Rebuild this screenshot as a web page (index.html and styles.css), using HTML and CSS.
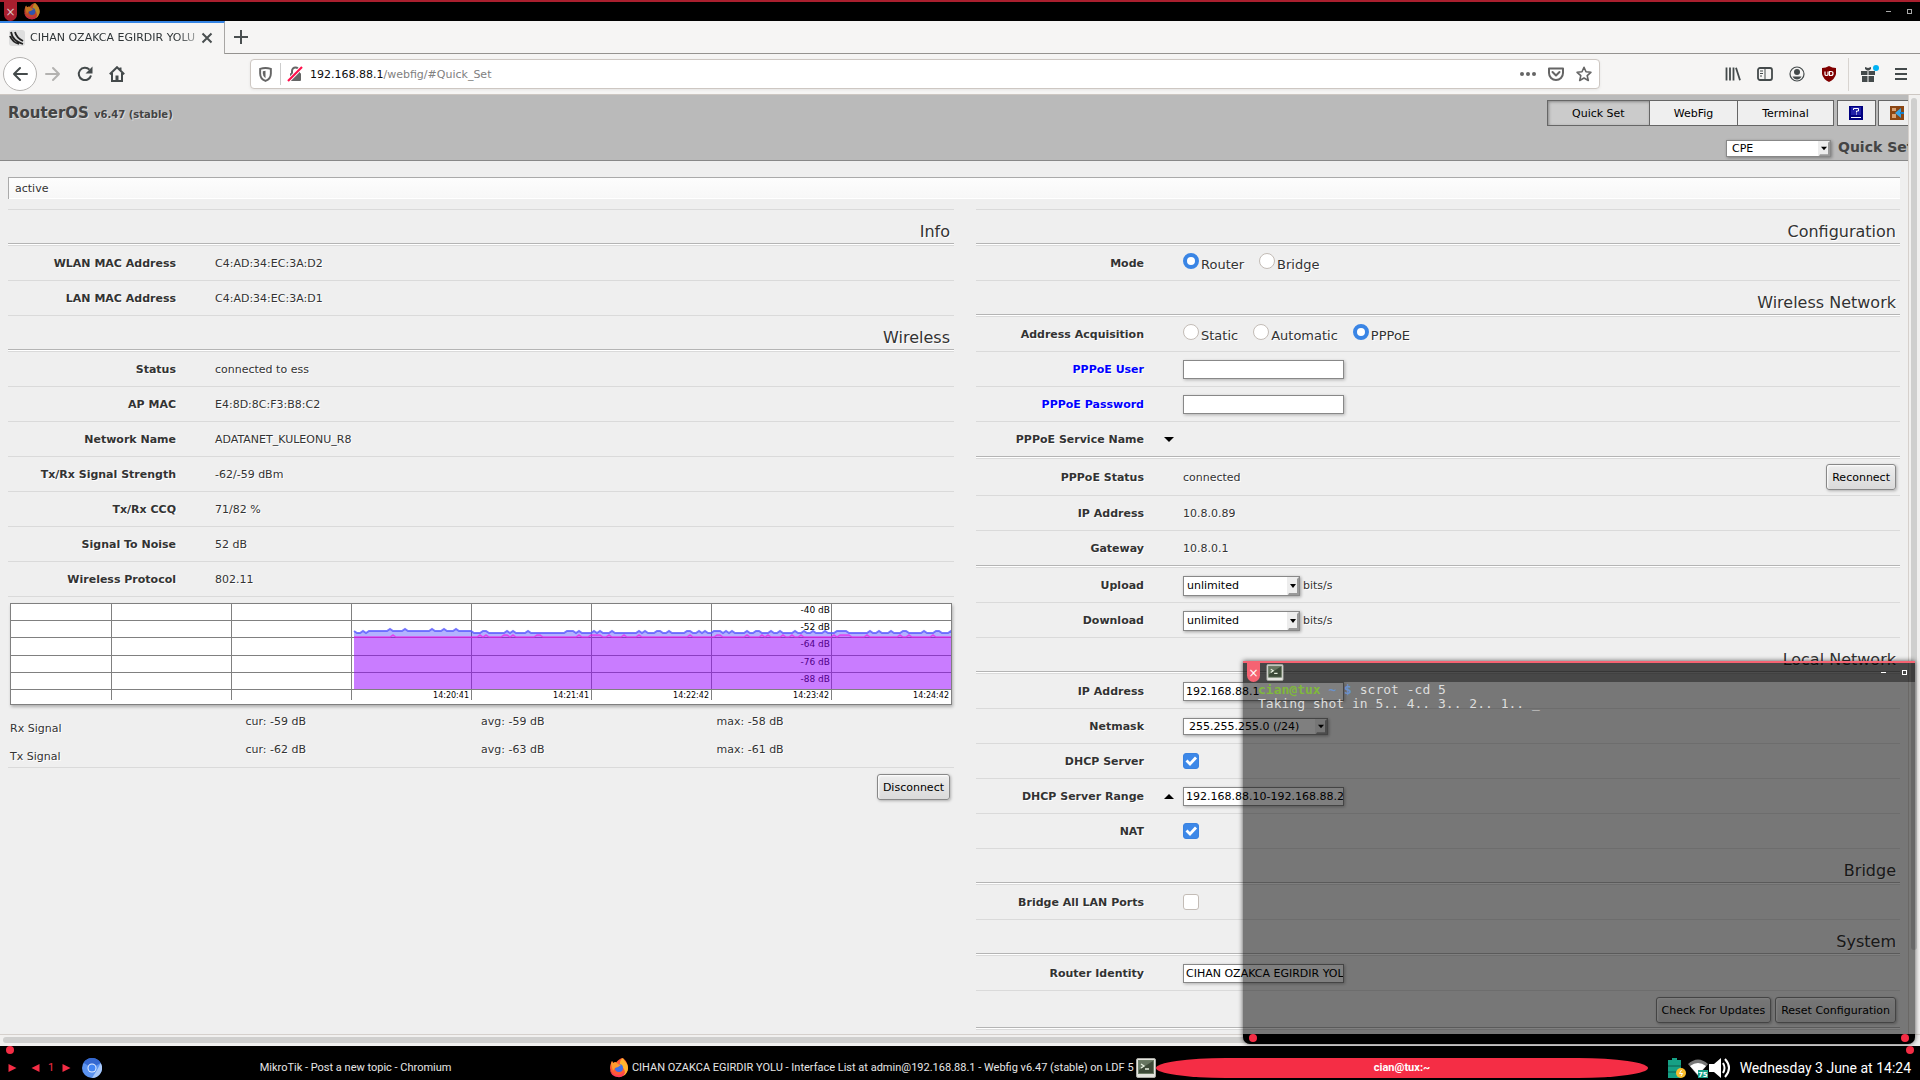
FILE: index.html
```html
<!DOCTYPE html>
<html lang="en">
<head>
<meta charset="utf-8">
<title>CIHAN OZAKCA EGIRDIR YOLU</title>
<link rel="stylesheet" href="styles.css">
</head>
<body>
<svg class="defs" aria-hidden="true">
  <symbol id="firefox" viewBox="0 0 20 20">
    <path fill="#ff5a36" d="M1 10C1 7 2 5 3 3l1 2 2-1 1 1c1-2 3-4 6-5 3 1 6 5 6 10a9 9 0 0 1-18 0z"/>
    <path fill="#ffb52e" d="M11 5c0-2 1-4 3-5 1 3 5 5 5 10 0 3-2 7-5 8 3-4 2-8-3-10z"/>
    <path fill="#ff3d5a" d="M1 11c1 4 4 6 8 6 3 0 6-2 7-4 0 4-4 7-7 6-4 0-8-3-8-8z"/>
    <circle cx="10" cy="10" r="4" fill="#3f6fe8"/>
    <path fill="#ff9a2e" d="M2 6l1-3 1 2 3-1 2 2 3 1-3 2-3 1-2 3z"/>
  </symbol>
  <symbol id="term" viewBox="0 0 20 20">
    <rect x=".5" y=".5" width="19" height="19" rx="1.5" fill="#e4e4df" stroke="#a9aaa4"/>
    <rect x="2.500" y="2.500" width="15" height="13" fill="#3d4a38" stroke="#6d7d66"/>
    <path d="M3 3h14L3 12z" fill="#8f9f88" opacity=".5"/>
    <path d="M5 6l3 2-3 2M9 11h4" fill="none" stroke="#e8f0e0" stroke-width="1.300"/>
  </symbol>
</svg>

<div class="titlebar">
  <button class="win-close" aria-label="Close">×</button>
  <svg class="app-icon"><use href="#firefox"/></svg>
  <span class="spacer"></span>
  <button class="win-min" aria-label="Minimize"></button>
  <button class="win-max" aria-label="Maximize"></button>
</div>

<div class="tabs">
  <div class="tab">
    <svg class="i16" viewBox="0 0 16 16"><rect width="16" height="16" rx="3" fill="#dedede"/><path d="M2 2c1 6 5 10 12 12M6 2c1 4 4 7 8 9M1 6c2 5 5 7 9 8" fill="none" stroke="#222" stroke-width="1.800"/></svg>
    <span class="tab-title">CIHAN OZAKCA EGIRDIR YOLU</span>
    <button aria-label="Close tab"><svg class="i12" viewBox="0 0 12 12"><path d="M1.500 1.500l9 9M10.500 1.500l-9 9" stroke="#4a4f50" stroke-width="2"/></svg></button>
  </div>
  <div class="tab-rest"><button aria-label="New tab"><svg class="i14" viewBox="0 0 14 14"><path d="M7 0v14M0 7h14" stroke="#4a4f50" stroke-width="2"/></svg></button></div>
</div>

<div class="toolbar">
  <button class="back" aria-label="Back"><svg class="i16" viewBox="0 0 16 16"><path d="M15 8H2M8 2L2 8l6 6" fill="none" stroke="#444a4b" stroke-width="2" stroke-linecap="round" stroke-linejoin="round"/></svg></button>
  <div class="nav">
    <button aria-label="Forward"><svg class="i16" viewBox="0 0 16 16"><path d="M1 8h13M8 2l6 6-6 6" fill="none" stroke="#b3b2b0" stroke-width="2" stroke-linecap="round" stroke-linejoin="round"/></svg></button>
    <button aria-label="Reload"><svg class="i16" viewBox="0 0 16 16"><path d="M14 9.500A6.200 6.200 0 1 1 12.500 3.600" fill="none" stroke="#444a4b" stroke-width="2"/><path d="M15.500.5v7h-7z" fill="#444a4b"/></svg></button>
    <button aria-label="Home"><svg class="i16" viewBox="0 0 16 16"><path d="M.8 8.200L8 1.200l7.200 7M3 7v8h10V7M11.500 1.500v3" fill="none" stroke="#444a4b" stroke-width="2"/><path d="M6.500 9.500h3V15h-3z" fill="#444a4b"/></svg></button>
  </div>
  <div class="urlbar">
    <svg class="shield" viewBox="0 0 12 14"><path d="M1 1.800Q6 .2 11 1.800V6q0 5-5 7Q1 11 1 6z" fill="none" stroke="#656565" stroke-width="1.800"/><path d="M6 3.500v7Q3.500 9 3.500 6V4z" fill="#656565"/></svg>
    <span class="url-div"></span>
    <svg class="lock" viewBox="0 0 16 16"><rect x="3" y="7" width="11" height="8" rx="1" fill="#656565"/><path d="M5 8V5a3.500 3.500 0 0 1 7 0v3" fill="none" stroke="#656565" stroke-width="2"/><path d="M1 15L15 1" stroke="#fff" stroke-width="4"/><path d="M1 15L15 1" stroke="#ff0f4b" stroke-width="2.200"/></svg>
    <p class="url"><b>192.168.88.1</b>/webfig/#Quick_Set</p>
    <svg class="i16" viewBox="0 0 16 16"><g fill="#656565"><circle cx="2" cy="8" r="2"/><circle cx="8" cy="8" r="2"/><circle cx="14" cy="8" r="2"/></g></svg>
    <svg class="i16" viewBox="0 0 16 16"><path d="M1 2.500h14V7a7 7 0 0 1-14 0zM4.500 6L8 9.500 11.500 6" fill="none" stroke="#656565" stroke-width="2" stroke-linejoin="round" stroke-linecap="round"/></svg>
    <svg class="i16" viewBox="0 0 16 16"><path d="M8 1.300l2 4.500 4.900.5-3.700 3.300 1.100 4.900L8 12l-4.300 2.500 1.100-4.900L1.100 6.300 6 5.800z" fill="none" stroke="#656565" stroke-width="1.600" stroke-linejoin="round"/></svg>
  </div>
  <div class="tools">
    <svg class="i16" viewBox="0 0 16 16"><path d="M1.500 1.500v13M5 1.500v13M8.500 1.500v13M11 1.800l4 12.500" stroke="#444a4b" stroke-width="1.800"/></svg>
    <svg class="i16" viewBox="0 0 16 16"><rect x="1" y="2" width="14" height="12" rx="2" fill="none" stroke="#444a4b" stroke-width="1.800"/><path d="M8 2v12M3 5h3M3 7.500h3M3 10h2" stroke="#444a4b"/></svg>
    <svg class="i16" viewBox="0 0 16 16"><circle cx="8" cy="8" r="7" fill="none" stroke="#444a4b" stroke-width="1.200"/><circle cx="8" cy="6" r="3" fill="#444a4b"/><path d="M3.500 10.500h9Q11 13.500 8 13.500t-4.500-3z" fill="#444a4b"/></svg>
    <svg class="i16" viewBox="0 0 16 16"><path d="M8 0q3 2 7 2v6q-1 5-7 8-6-3-7-8V2q4 0 7-2z" fill="#800000"/><path d="M4 5.500v3q0 1 1.500 1T7 8.500v-3M8.500 5.500v4h1.500q2 0 2-2t-2-2z" fill="none" stroke="#fff" stroke-width="1.200"/></svg>
    <span class="tool-div"></span>
    <svg class="gift" viewBox="0 0 18 18"><path fill="#444a4b" d="M0 6h6.500v4H0zM7.500 6H14v4H7.500zM1 11h5.500v6H1zM7.500 11H13v6H7.500zM4 2l3 1 3-1v2L8 5.500H6L4 4z"/><circle cx="15" cy="3" r="3" fill="#00b3f4"/></svg>
    <svg class="i14" viewBox="0 0 14 14"><path d="M1 2h12M1 7h12M1 12h12" stroke="#444a4b" stroke-width="2"/></svg>
  </div>
</div>

<div class="view">
  <div class="page">
    <header class="head">
      <h1>RouterOS <small>v6.47 (stable)</small></h1>
      <div class="head-right">
        <nav class="menu">
          <div class="menu-tabs">
            <a href="#quick" class="on">Quick Set</a><a href="#webfig">WebFig</a><a href="#terminal">Terminal</a>
          </div>
          <button class="menu-icon" aria-label="Manual"><svg class="i14" viewBox="0 0 14 14"><rect width="14" height="14" fill="#000080"/><rect x="2" y="1" width="10" height="8" fill="#2020a8"/><path d="M4.500 4V2.500h5v2.500h-2v1.500M2 11.500h10" fill="none" stroke="#fff"/><path d="M7 8h1" stroke="#fff"/></svg></button>
          <button class="menu-icon" aria-label="Log out"><svg class="i14" viewBox="0 0 14 14"><rect width="14" height="14" fill="#8a4513"/><path d="M2 2h4v3H2zM2 8h4v4H2z" fill="#d9a070"/><path d="M11 2v10L5 7z" fill="#37a4e8"/><path d="M10 6h4v2h-4z" fill="#187ec4"/></svg></button>
        </nav>
        <div class="mode">
          <select class="combo cpe" aria-label="Quick set mode"><option>CPE</option></select>
          <h2>Quick Set</h2>
        </div>
      </div>
    </header>

    <main>
      <p class="status">active</p>
      <div class="cols">
        <section class="col left">
          <h3>Info</h3>
          <div class="row"><b>WLAN MAC Address</b><span>C4:AD:34:EC:3A:D2</span></div>
          <div class="row"><b>LAN MAC Address</b><span>C4:AD:34:EC:3A:D1</span></div>
          <h3>Wireless</h3>
          <div class="row"><b>Status</b><span>connected to ess</span></div>
          <div class="row"><b>AP MAC</b><span>E4:8D:8C:F3:B8:C2</span></div>
          <div class="row"><b>Network Name</b><span>ADATANET_KULEONU_R8</span></div>
          <div class="row"><b>Tx/Rx Signal Strength</b><span>-62/-59 dBm</span></div>
          <div class="row"><b>Tx/Rx CCQ</b><span>71/82 %</span></div>
          <div class="row"><b>Signal To Noise</b><span>52 dB</span></div>
          <div class="row"><b>Wireless Protocol</b><span>802.11</span></div>
          <div class="graph-block">
            <svg class="graph" viewBox="0 0 940 100">
              <g stroke="#808080" shape-rendering="crispEdges">
                <path fill="none" d="M0 16.500h940M0 33.500h940M0 51.500h940M0 68.500h940M0 85.500h940M100.500 0v96M220.500 0v96M340.500 0v96M460.500 0v96M580.500 0v96M700.500 0v96M820.500 0v96"/>
              </g>
              <g class="db"><text x="819" y="9">-40 dB</text><text x="819" y="26">-52 dB</text><text x="819" y="43">-64 dB</text><text x="819" y="61">-76 dB</text><text x="819" y="78">-88 dB</text></g>
              <g class="tm"><text x="458" y="94">14:20:41</text><text x="578" y="94">14:21:41</text><text x="698" y="94">14:22:42</text><text x="818" y="94">14:23:42</text><text x="938" y="94">14:24:42</text></g>
              <path id="rx-area" fill="#00f" fill-opacity=".3"/>
              <path id="tx-area" fill="#f0f" fill-opacity=".3"/>
              <path id="rx-line" fill="none" stroke="#5a5aff" stroke-opacity=".8" stroke-width="2"/>
              <path id="tx-line" fill="none" stroke="#f020e8" stroke-opacity=".7" stroke-width="1.500"/>
            </svg>
            <table class="stats">
              <tr><th scope="row">Rx Signal</th><td>cur: -59 dB</td><td>avg: -59 dB</td><td>max: -58 dB</td></tr>
              <tr><th scope="row">Tx Signal</th><td>cur: -62 dB</td><td>avg: -63 dB</td><td>max: -61 dB</td></tr>
            </table>
          </div>
          <div class="actions"><button class="btn">Disconnect</button></div>
        </section>

        <section class="col right">
          <h3>Configuration</h3>
          <div class="row"><b>Mode</b><span class="radios"><label><input type="radio" name="mode" checked>Router</label><label><input type="radio" name="mode">Bridge</label></span></div>
          <h3>Wireless Network</h3>
          <div class="row"><b>Address Acquisition</b><span class="radios"><label><input type="radio" name="acq">Static</label><label><input type="radio" name="acq">Automatic</label><label><input type="radio" name="acq" checked>PPPoE</label></span></div>
          <div class="row"><label class="changed" for="user">PPPoE User</label><input class="text" id="user" type="text"></div>
          <div class="row"><label class="changed" for="pass">PPPoE Password</label><input class="text" id="pass" type="password"></div>
          <div class="row"><b>PPPoE Service Name</b><button class="fold" aria-label="Expand"><svg class="arrow" viewBox="0 0 10 5"><path d="M0 0h10L5 5z"/></svg></button></div>
          <div class="rule"></div>
          <div class="row tall"><b>PPPoE Status</b><span>connected</span><button class="btn">Reconnect</button></div>
          <div class="row"><b>IP Address</b><span>10.8.0.89</span></div>
          <div class="row"><b>Gateway</b><span>10.8.0.1</span></div>
          <div class="rule"></div>
          <div class="row"><label for="up">Upload</label><span class="unit"><select class="combo rate" id="up"><option>unlimited</option></select>bits/s</span></div>
          <div class="row"><label for="down">Download</label><span class="unit"><select class="combo rate" id="down"><option>unlimited</option></select>bits/s</span></div>
          <h3>Local Network</h3>
          <div class="row"><label for="ip">IP Address</label><input class="text" id="ip" type="text" value="192.168.88.1"></div>
          <div class="row"><label for="mask">Netmask</label><select class="combo mask" id="mask"><option>255.255.255.0 (/24)</option></select></div>
          <div class="row"><label for="dhcp">DHCP Server</label><input type="checkbox" id="dhcp" checked></div>
          <div class="row"><label for="range">DHCP Server Range</label><button class="fold" aria-label="Collapse"><svg class="arrow" viewBox="0 0 10 5"><path d="M0 5h10L5 0z"/></svg></button><input class="text" id="range" type="text" value="192.168.88.10-192.168.88.2"></div>
          <div class="row"><label for="nat">NAT</label><input type="checkbox" id="nat" checked></div>
          <h3>Bridge</h3>
          <div class="row"><label for="bridge">Bridge All LAN Ports</label><input type="checkbox" id="bridge"></div>
          <h3>System</h3>
          <div class="row"><label for="ident">Router Identity</label><input class="text" id="ident" type="text" value="CIHAN OZAKCA EGIRDIR YOL"></div>
          <div class="actions"><button class="btn">Check For Updates</button><button class="btn">Reset Configuration</button></div>
          <div class="rule end"></div>
        </section>
      </div>
    </main>
  </div>
  <div class="vscroll"><div></div></div>
  <div class="hscroll"><div></div></div>
</div>

<div class="panel">
  <span class="dot tl"></span><span class="dot tr"></span>
  <div class="pager">
    <svg class="tri" viewBox="0 0 8 8"><path d="M0 0l8 4-8 4z"/></svg>
    <svg class="tri gap" viewBox="0 0 8 8"><path d="M8 0L0 4l8 4z"/></svg>
    <span>1</span>
    <svg class="tri" viewBox="0 0 8 8"><path d="M0 0l8 4-8 4z"/></svg>
  </div>
  <button class="task"><svg class="i20" viewBox="0 0 20 20"><circle cx="10" cy="10" r="10" fill="#5b93f0"/><path d="M10 10L1.500 4.800A10 10 0 0 1 18.700 5z" fill="#3568d0"/><path d="M10 20l5-8 3.700-7A10 10 0 0 1 10 20z" fill="#a8c8fa"/><circle cx="10" cy="10" r="4.500" fill="#e8f0fe"/><circle cx="10" cy="10" r="3.500" fill="#4285f4"/></svg><span>MikroTik - Post a new topic - Chromium</span></button>
  <button class="task"><svg class="i20"><use href="#firefox"/></svg><span>CIHAN OZAKCA EGIRDIR YOLU - Interface List at admin@192.168.88.1 - Webfig v6.47 (stable) on LDF 5</span></button>
  <button class="task current"><svg class="i20"><use href="#term"/></svg><span>cian@tux:~</span></button>
  <div class="tray">
    <svg class="i20" viewBox="0 0 20 20"><path d="M1 2h4V0h5v2h4v18H1z" fill="#16a085"/><path d="M1 8h13M1 14h13" stroke="#0b5e4e"/><circle cx="14" cy="15" r="5" fill="#fbbf2d"/><path d="M14.500 12l-2 3.500h3L14 18" fill="none" stroke="#fff"/></svg>
    <svg class="i20" viewBox="0 0 20 20"><path d="M0 6q10-9 20 0L10 18z" fill="#777"/><path d="M2 8q8-6 16 0l-8 9z" fill="#fff"/><rect x="10" y="12" width="10" height="8" fill="#16a085"/><text class="badge" x="10" y="19">75</text></svg>
    <svg class="speaker" viewBox="0 0 22 20"><path d="M0 6h5l7-6v20l-7-6H0z" fill="#fff"/><path d="M14 5q3 5 0 10M16 1q8 9 0 18" fill="none" stroke="#fff" stroke-width="2"/></svg>
    <time>Wednesday 3 June at 14:24</time>
  </div>
</div>

<div class="terminal">
  <div class="term-bar">
    <button class="win-close" aria-label="Close">×</button>
    <svg class="app-icon"><use href="#term"/></svg>
    <span class="spacer"></span>
    <button class="win-min" aria-label="Minimize"></button>
    <button class="win-max" aria-label="Maximize"></button>
  </div>
  <pre><b class="who">cian@tux</b> <b class="path">~ $</b> scrot -cd 5
Taking shot in 5.. 4.. 3.. 2.. 1.. _</pre>
  <div class="term-foot"><span class="dot"></span><span class="dot"></span></div>
</div>
<script src="chart.js"></script>
</body>
</html>
```
FILE: styles.css
```css
* { box-sizing: border-box; }
body {
  margin: 0; height: 100vh; display: flex; flex-direction: column; position: relative;
  overflow: hidden; background: #000; color: #333; font: 11px/16px "DejaVu Sans", sans-serif;
}
button { font: inherit; color: inherit; background: none; border: 0; padding: 0; margin: 0; }
h1, h2, h3, p, pre { margin: 0; font-weight: normal; }
svg { display: block; flex: none; }
.defs { display: none; }
.spacer { flex: 1; }
.i12 { width: 12px; height: 12px; }
.i14 { width: 14px; height: 14px; }
.i16 { width: 16px; height: 16px; }
.i20 { width: 20px; height: 20px; }

/* window frames */
.titlebar, .term-bar {
  display: flex; align-items: center; height: 21px; flex: none;
  border-top: 2px solid #a91f2e; padding: 0 8px 0 4px; background: #000;
}
.win-close {
  width: 13px; height: 19px; border-radius: 0 0 7px 7px; background: #a91f2e;
  color: #d8c4c6; font-size: 12px; line-height: 18px; margin-right: 6px;
}
.app-icon { width: 18px; height: 17px; }
.titlebar .app-icon { opacity: .75; }
.win-min { width: 5px; height: 1px; background: #aaa; margin-right: 16px; }
.win-max { width: 5px; height: 5px; border: 1px solid #aaa; }

/* browser chrome */
.tabs { display: flex; height: 33px; flex: none; background: #f6f5f4; }
.tab {
  width: 225px; display: flex; align-items: center; padding: 0 11px 2px 9px; gap: 5px;
  border-top: 2px solid #3584e4; border-right: 1px solid #a8a6a4;
}
.tab-title {
  flex: 1; overflow: hidden; white-space: nowrap; color: #2e3436;
  mask-image: linear-gradient(to right, #000 88%, #0006);
}
.tab-rest { flex: 1; display: flex; padding: 0 9px; border-bottom: 1px solid #959390; }
.toolbar {
  display: flex; align-items: center; height: 41px; flex: none; background: #f6f5f4;
  border-bottom: 1px solid #cdc7c2; padding: 0 12px 0 3px;
}
.back {
  width: 34px; height: 34px; border: 1px solid #b4b2b0; border-radius: 50%; background: #fff;
  display: grid; place-items: center;
}
.nav { display: flex; gap: 16px; padding-left: 8px; width: 213px; }
.urlbar {
  flex: 1; height: 30px; display: flex; align-items: center; gap: 12px; background: #fff;
  border: 1px solid #cdc7c2; border-radius: 4px; padding: 0 7px 0 8px; box-shadow: 0 1px 3px #0001;
}
.shield { width: 13px; height: 15px; }
.url-div { width: 1px; height: 22px; background: #ccc; margin-left: -4px; margin-right: -6px; }
.lock { width: 16px; height: 16px; margin-right: -5px; }
.url { flex: 1; color: #808080; padding-top: 1px; }
.url b { font-weight: normal; color: #0c0c0d; }
.tools { display: flex; align-items: center; gap: 16px; padding-left: 125px; }
.tool-div { width: 1px; height: 33px; background: #d8d4d0; margin: 0 -4px 0 -5px; }
.gift { width: 18px; height: 18px; margin-right: -1px; }

/* web page */
.view {
  flex: 1; min-height: 0; display: grid; grid-template: minmax(0, 1fr) 12px / minmax(0, 1fr) 12px;
  background: #f1f0ef;
}
.page { background: #efefef; overflow: hidden; }
.vscroll { border-left: 1px solid #d5d0cc; padding: 3px 3px 0 2px; }
.vscroll div { height: 91%; background: #cfcfce; border-radius: 3px; }
.hscroll { border-top: 1px solid #d5d0cc; padding: 2px 0 3px 3px; grid-column: 1 / 3; }
.hscroll div { width: 97%; height: 6px; background: #cfcfce; border-radius: 3px; }
.head {
  display: flex; justify-content: space-between; height: 66px; overflow: hidden;
  background: #bababa; border-bottom: 1px solid #888; padding-top: 5px;
}
h1 { font-size: 15px; font-weight: bold; line-height: 26px; padding-left: 8px; color: #444; text-shadow: 1px 1px #ddd; }
h1 small { font-size: 10px; }
.head-right { width: 361px; }
.menu { display: flex; width: 371px; }
.menu-tabs { display: flex; border: 1px solid #666; margin-right: 3px; }
.menu-tabs a {
  height: 24px; line-height: 25px; padding: 0 24px; text-align: center; color: #000;
  text-decoration: none; background: #efefef; white-space: nowrap;
}
.menu-tabs a + a { border-left: 1px solid #666; }
.menu-tabs .on { background: #cbcbcb; box-shadow: inset 1px 1px 3px #888; }
.menu-icon { width: 39px; height: 26px; border: 1px solid #666; background: #efefef; display: grid; place-items: center; margin-right: 2px; flex: none; }
.mode { display: flex; align-items: flex-start; gap: 7px; padding: 14px 0 0 179px; white-space: nowrap; }
h2 { font-size: 14px; font-weight: bold; line-height: 14px; color: #444; }
main { padding: 16px 8px; text-shadow: 1px 1px #fff; }
.status {
  height: 22px; line-height: 21px; padding-left: 6px; border: solid #aaa; border-width: 1px 0 0 1px;
  background: linear-gradient(#fdfdfd, #f7f7f7); box-shadow: inset 0 -1px #fff;
}
.cols { display: grid; grid-template-columns: 1fr 1fr; margin-top: 10px; }
.right { margin-left: 22px; }
h3 {
  height: 36px; font-size: 16px; line-height: 44px; text-align: right; padding-right: 4px;
  border-top: 1px solid #dadada; box-shadow: inset 0 -1px #fff, inset 0 -2px #b4b4b4;
}
.rule { height: 2px; background: linear-gradient(#b4b4b4 50%, #fff 50%); }
.end { height: 3px; background: linear-gradient(#b4b4b4 33%, #fff 33%, #fff 66%, #dadada 66%); }
.row {
  display: grid; grid-template-columns: 168px 39px 1fr auto; align-items: center;
  height: 35px; border-top: 1px solid #dadada; padding-right: 4px;
}
.row > * { grid-column: 3; grid-row: 1; justify-self: start; }
.row > b, .row > label, .row > span { padding-top: 2px; }
.row > :first-child { grid-column: 1; justify-self: end; font-weight: bold; color: #333; }
.row > .fold { grid-column: 2; justify-self: end; padding-right: 9px; }
.row > .btn { grid-column: 4; }
.row > .changed:first-child { color: #00f; }
.tall { height: 37px; }
.arrow { width: 10px; height: 5px; }
.radios { display: flex; gap: 15px; font-size: 13px; }
.radios label { display: flex; align-items: center; gap: 2px; padding-top: 2px; }
.radios input { margin: -8px 0 0; }
.unit { display: flex; align-items: center; gap: 3px; }
input, select { font: inherit; color: #000; }
input[type=radio], input[type=checkbox] {
  appearance: none; width: 16px; height: 16px; background: #fff; border: 1px solid #c3bcb6; border-radius: 3px;
}
input[type=checkbox] { margin: 0; }
input[type=radio] { border-radius: 50%; }
input[type=radio]:checked { border: 4px solid #3a85e5; }
input[type=checkbox]:checked {
  border-color: #3a82e0;
  background: #3d88e8 url("data:image/svg+xml,%3Csvg xmlns='http://www.w3.org/2000/svg' viewBox='0 0 14 14'%3E%3Cpath d='M2.500 6.500l3.500 3.500 6-6.500' fill='none' stroke='white' stroke-width='2.800'/%3E%3C/svg%3E");
}
.text {
  width: 161px; height: 19px; border: 1px solid #888; padding: 0 0 0 2px; background: #fff;
  box-shadow: 1px 1px 3px #0004; border-radius: 0;
}
.combo {
  appearance: none; flex: none; height: 20px; padding: 0 14px 0 3px; border: 1px solid #888; border-radius: 0;
  box-shadow: 1px 1px 3px #0005;
  background: #fff url("data:image/svg+xml,%3Csvg xmlns='http://www.w3.org/2000/svg' viewBox='0 0 12 18' preserveAspectRatio='none'%3E%3Cpath fill='%23ededed' d='M0 0h12v18H0z'/%3E%3Cpath fill='%23999' d='M12 0v18H1l1-2h8V2z'/%3E%3Cpath d='M3 7h6L6 11z'/%3E%3C/svg%3E") right / 12px 100% no-repeat;
}
.rate { width: 117px; }
.cpe { width: 105px; height: 17px; padding-left: 5px; }
.mask { width: 145px; height: 17px; padding-left: 5px; }
.btn {
  height: 26px; padding: 1px 5px 0; border: 1px solid #888; border-radius: 3px; color: #000; text-shadow: none;
  background: linear-gradient(#ededed, #dadada); box-shadow: 1px 1px 3px #0004, inset 1px 1px 2px #fff;
}
.actions { display: flex; justify-content: flex-end; gap: 4px; border-top: 1px solid #dadada; padding: 6px 4px 4px; }
.graph-block { border-top: 1px solid #dadada; padding: 6px 2px 0; }
.graph { width: 100%; border: 1px solid #808080; background: #fff; box-shadow: 1px 2px 3px #0004; text-shadow: none; font-size: 9px; }
.graph text { text-anchor: end; fill: #000; }
.graph .tm { font-size: 8px; }
.stats { width: 100%; margin-top: 6px; border-spacing: 0; table-layout: fixed; line-height: 18px; }
.stats tr { height: 28px; }
.stats td { padding: 2px 0 0; vertical-align: top; }
.stats th { padding: 0 0 1px; vertical-align: bottom; text-align: left; font-weight: normal; }

/* desktop panel */
.panel {
  height: 34px; flex: none; display: flex; align-items: flex-end; position: relative; background: #000;
  color: #e6e6e6; padding: 0 9px 1px 8px; font: 11px/20px Roboto, sans-serif;
}
.pager { display: flex; align-items: center; width: 74px; height: 22px; gap: 8px; color: #f52d45; }
.tri { width: 9px; height: 8px; fill: #f52d45; }
.gap { margin-left: 6px; }
.task { flex: 1; min-width: 0; display: flex; align-items: center; height: 22px; padding-bottom: 1px; white-space: nowrap; }
.task span { flex: 1; text-align: center; }
.current { flex-grow: .97; }
.current span { background: #f52d45; color: #fff; font-weight: bold; border-radius: 70px / 10px; }
.tray { display: flex; align-items: center; gap: 1px; padding-left: 19px; height: 22px; font-size: 14px; }
.tray time { padding-left: 8px; color: #fff; white-space: nowrap; }
.speaker { width: 22px; height: 20px; }
.badge { font: bold 7px "DejaVu Sans", sans-serif; fill: #fff; }
.dot { width: 8px; height: 8px; border-radius: 50%; background: #f52d45; }
.tl, .tr { position: absolute; top: 0; left: 6px; }
.tr { left: auto; right: 6px; }

/* terminal window */
.terminal {
  position: absolute; right: 5px; bottom: 36px; width: 35%; height: 383px; display: flex; flex-direction: column;
  background: rgba(0, 0, 0, .5); border-radius: 0 0 7px 7px; box-shadow: 0 0 5px #000a; overflow: hidden;
}
.term-bar { border-color: #f56372; background: rgba(0, 0, 0, .4); }
.term-bar .win-close { background: #f56372; color: #fff; }
.term-bar .win-min, .term-bar .win-max { border-color: #fff; }
.term-bar .win-min { background: #fff; }
.terminal pre { flex: 1; padding: 1px 15px; color: #ddd; font: 13px/14px "DejaVu Sans Mono", monospace; }
.who { color: #7fb83c; }
.path { color: #6a92cc; }
.term-foot { height: 10px; background: #000; display: flex; justify-content: space-between; padding: 0 6px; }
```
FILE: chart.js
```js
// Signal history, one sample every 3px, for the graph of received and sent levels.
const BOTTOM = 85;
const START = 343;
const END = 940;
let seed = 11;
function rand() {
  seed = (seed * 16807) % 2147483647;
  return seed / 2147483647;
}
function series(base, step, chance) {
  const pts = [];
  for (let x = START; x <= END; x += 3) {
    const early = x < 460 ? chance / 2 : chance;
    pts.push([x, rand() < early ? base - step : base]);
  }
  pts.push([END, base]);
  return pts;
}
function draw(name, pts) {
  const line = pts.map((p) => p.join(" ")).join("L");
  document.getElementById(name + "-line").setAttribute("d", "M" + line);
  document.getElementById(name + "-area").setAttribute("d", `M${START} ${BOTTOM}L${line}L${END} ${BOTTOM}z`);
}
const rx = series(29, 2, 0.35).map(([x, y]) => (x > 355 && x < 460 ? [x, y - 2] : [x, y]));
draw("rx", rx);
draw("tx", series(33, 2, 0.15));
```
